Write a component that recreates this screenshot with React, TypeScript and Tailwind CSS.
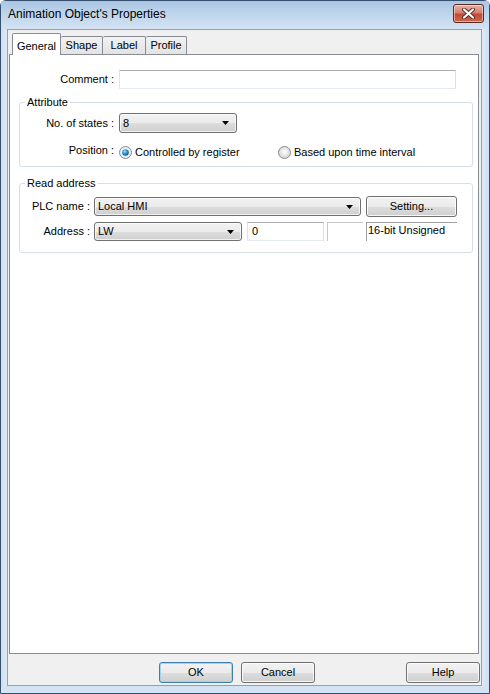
import React from "react";

const btnBg =
  "bg-[linear-gradient(to_bottom,#f2f2f2_0%,#ebebeb_50%,#dddddd_51%,#cfcfcf_100%)]";

function Arrow() {
  return (
    <svg width="7" height="4" viewBox="0 0 7 4" className="shrink-0">
      <path d="M0 0 H7 L3.5 4 Z" fill="#000" />
    </svg>
  );
}

function Combo({ value, w, h = 20 }: { value: string; w: string; h?: number }) {
  return (
    <div
      className={`${w} ${btnBg} flex items-center justify-between rounded-[3px] border border-[#707070] pl-[3px] pr-[7px] shadow-[inset_0_0_0_1px_rgba(255,255,255,0.7)]`}
      style={{ height: h }}
    >
      <span className="leading-none text-black">{value}</span>
      <Arrow />
    </div>
  );
}

function TextBox({ w, value, h = 19 }: { w: string; value?: string; h?: number }) {
  return (
    <div
      className={`${w} flex items-center border border-t-[#abadb3] border-l-[#e2e3ea] border-r-[#dbdfe6] border-b-[#e3e9ef] bg-white pl-[4px]`}
      style={{ height: h }}
    >
      <span className="leading-none">{value}</span>
    </div>
  );
}

function Radio({ checked }: { checked?: boolean }) {
  return (
    <svg width="13" height="13" viewBox="0 0 13 13" className="shrink-0">
      <defs>
        <radialGradient id={checked ? "rgOn" : "rgOff"} cx="0.5" cy="0.45" r="0.6">
          <stop offset="0" stopColor="#ffffff" />
          <stop offset="1" stopColor={checked ? "#d9e6f0" : "#cfcfcf"} />
        </radialGradient>
        <radialGradient id="dot" cx="0.4" cy="0.35" r="0.7">
          <stop offset="0" stopColor="#9de4fb" />
          <stop offset="0.5" stopColor="#2a8fd0" />
          <stop offset="1" stopColor="#0f4c82" />
        </radialGradient>
      </defs>
      <circle cx="6.5" cy="6.5" r="6" fill={`url(#${checked ? "rgOn" : "rgOff"})`} stroke="#8b8b8b" strokeWidth="1" />
      {checked && <circle cx="6.5" cy="6.5" r="3.3" fill="url(#dot)" />}
    </svg>
  );
}

function Button({ label, w, def }: { label: string; w: string; def?: boolean }) {
  return (
    <div
      className={`${w} h-[21px] ${btnBg} flex items-center justify-center rounded-[3px] border ${
        def ? "border-[#3c7fb1] shadow-[inset_0_0_0_1px_#9fd3f0]" : "border-[#707070] shadow-[inset_0_0_0_1px_rgba(255,255,255,0.8)]"
      }`}
    >
      <span className="leading-none text-black">{label}</span>
    </div>
  );
}

function Group({ title, children, h }: { title: string; children: React.ReactNode; h: string }) {
  return (
    <div className={`relative ml-[9px] w-[454px] ${h} rounded-[3px] border border-[#d5dfe5] shadow-[inset_1px_1px_0_#ffffff]`}>
      <span className="absolute left-[5px] top-[-7px] bg-white px-[2px] leading-[12px]">{title}</span>
      {children}
    </div>
  );
}

export default function App() {
  return (
    <div className="h-[694px] w-[490px] overflow-hidden bg-white font-['Liberation_Sans',Arial,sans-serif] text-[11px] text-black">
      <div className="flex h-full w-full flex-col rounded-t-[6px] border border-[#34506e] bg-[#cfe0f2]">
        {/* Title bar */}
        <div className="flex h-[28px] shrink-0 items-start justify-between bg-[linear-gradient(to_bottom,#aac5e2_0%,#bcd3ea_40%,#d3e3f3_100%)] pl-[7px] pr-[5px]">
          <span className="mt-[6px] text-[12px] leading-[14px] text-black">Animation Object&apos;s Properties</span>
          <div className="mt-[3px] flex h-[19px] w-[31px] items-center justify-center rounded-[3px] border border-[#5a2a24] bg-[linear-gradient(to_bottom,#e8b3a8_0%,#d4806f_45%,#c24a34_55%,#cd6a4f_100%)] shadow-[inset_0_0_0_1px_rgba(255,255,255,0.45)]">
            <svg width="13" height="11" viewBox="0 0 13 11">
              <path d="M2 1.5 L11 9.5 M11 1.5 L2 9.5" stroke="#5a2a24" strokeWidth="4" strokeLinecap="round" />
              <path d="M2 1.5 L11 9.5 M11 1.5 L2 9.5" stroke="#ffffff" strokeWidth="2.2" strokeLinecap="round" />
            </svg>
          </div>
        </div>

        {/* Middle */}
        <div className="flex min-h-0 flex-1">
          <div className="w-[6px] shrink-0 bg-[linear-gradient(to_right,#cfe0f2,#dce9f6)]" />
          <div className="flex flex-1 flex-col border border-[#8da2ba] bg-[#f0f0f0]">
            {/* Tabs */}
            <div className="ml-[4px] mt-[3px] flex h-[21px] items-end">
              <div className="relative z-10 mb-[-1px] flex h-[22px] w-[49px] items-start justify-center rounded-t-[2px] border border-b-0 border-[#898c95] bg-white pt-[4px]">
                General
              </div>
              <div className="flex h-[18px] w-[42px] items-center justify-center rounded-t-[2px] border border-l-0 border-b-0 border-[#898c95] bg-[linear-gradient(to_bottom,#f2f2f2,#e3e3e3)]">
                Shape
              </div>
              <div className="flex h-[18px] w-[43px] items-center justify-center rounded-t-[2px] border border-l-0 border-b-0 border-[#898c95] bg-[linear-gradient(to_bottom,#f2f2f2,#e3e3e3)]">
                Label
              </div>
              <div className="flex h-[18px] w-[41px] items-center justify-center rounded-t-[2px] border border-l-0 border-b-0 border-[#898c95] bg-[linear-gradient(to_bottom,#f2f2f2,#e3e3e3)]">
                Profile
              </div>
            </div>

            {/* Panel */}
            <div className="ml-[1px] flex h-[600px] w-[470px] flex-col border border-[#898c95] bg-white pt-[15px]">
              {/* Comment */}
              <div className="flex items-center">
                <span className="w-[104px] text-right">Comment :</span>
                <div className="ml-[5px]">
                  <TextBox w="w-[337px]" />
                </div>
              </div>

              {/* Attribute */}
              <div className="mt-[13px]">
                <Group title="Attribute" h="h-[65px]">
                  <div className="flex flex-col pt-[10px]">
                    <div className="flex items-center">
                      <span className="w-[94px] text-right">No. of states :</span>
                      <div className="ml-[5px]">
                        <Combo value="8" w="w-[118px]" />
                      </div>
                    </div>
                    <div className="mt-[11px] flex h-[16px] items-center">
                      <span className="mt-[-3px] w-[94px] text-right">Position :</span>
                      <div className="ml-[5px] flex w-[159px] items-center gap-[3px]">
                        <Radio checked />
                        <span>Controlled by register</span>
                      </div>
                      <div className="flex items-center gap-[3px]">
                        <Radio />
                        <span>Based upon time interval</span>
                      </div>
                    </div>
                  </div>
                </Group>
              </div>

              {/* Read address */}
              <div className="mt-[16px]">
                <Group title="Read address" h="h-[70px]">
                  <div className="flex flex-col gap-[5px] pt-[12px]">
                    <div className="flex items-center">
                      <span className="w-[70px] text-right">PLC name :</span>
                      <div className="ml-[4px]">
                        <Combo value="Local HMI" w="w-[267px]" h={19} />
                      </div>
                      <div className="ml-[5px]">
                        <Button label="Setting..." w="w-[91px]" />
                      </div>
                    </div>
                    <div className="flex items-center">
                      <span className="w-[70px] text-right">Address :</span>
                      <div className="ml-[4px]">
                        <Combo value="LW" w="w-[148px]" h={19} />
                      </div>
                      <div className="ml-[5px]">
                        <TextBox w="w-[77px]" value="0" />
                      </div>
                      <div className="ml-[3px] h-[19px] w-[36px] border-l border-t border-[#c7c7c7] bg-white" />
                      <div className="ml-[3px] h-[19px] w-[91px] border-l border-t border-[#a0a0a0] bg-white pl-[1px] leading-[15px]">
                        16-bit Unsigned
                      </div>
                    </div>
                  </div>
                </Group>
              </div>
            </div>

            {/* Bottom buttons */}
            <div className="mt-[8px] flex items-start">
              <div className="ml-[151px]">
                <Button label="OK" w="w-[74px]" def />
              </div>
              <div className="ml-[8px]">
                <Button label="Cancel" w="w-[74px]" />
              </div>
              <div className="ml-[91px]">
                <Button label="Help" w="w-[74px]" />
              </div>
            </div>
          </div>
          <div className="w-[7px] shrink-0 bg-[linear-gradient(to_left,#cfe0f2,#dce9f6)]" />
        </div>
        <div className="h-[7px] shrink-0 bg-[#d3e3f3]" />
      </div>
    </div>
  );
}
